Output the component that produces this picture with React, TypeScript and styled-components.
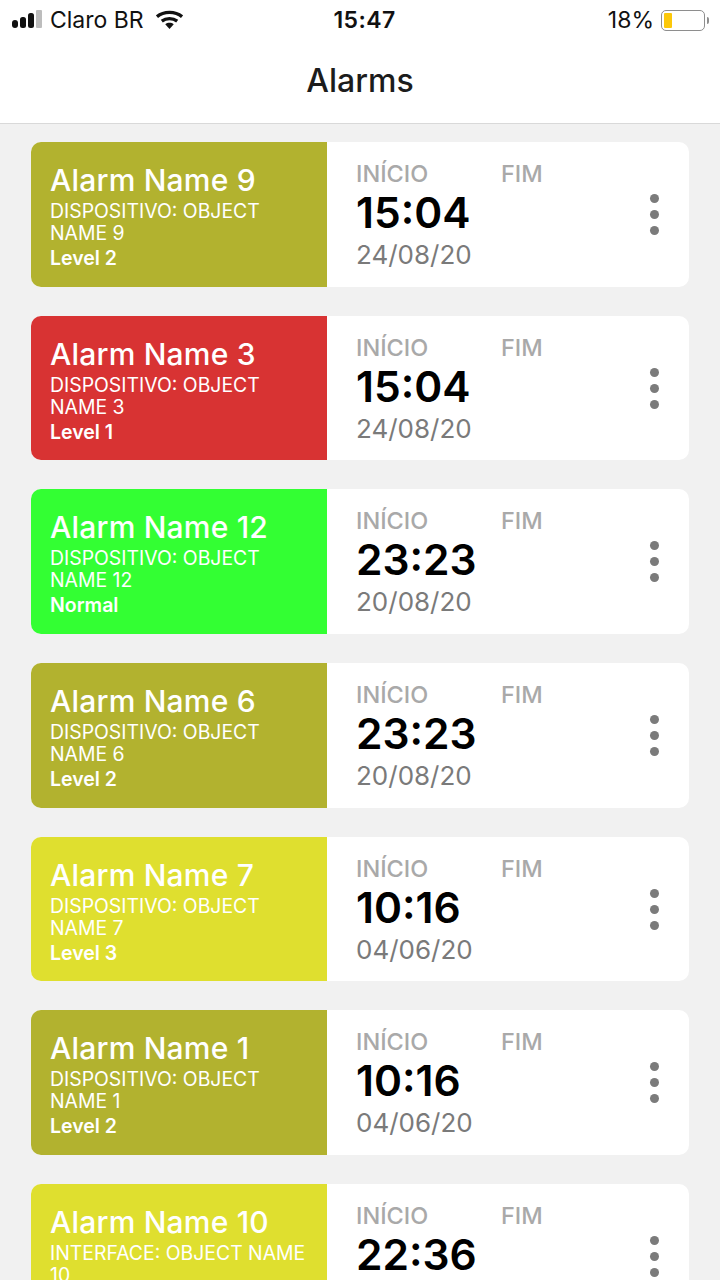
import styled, { createGlobalStyle } from 'styled-components';

const GlobalStyle = createGlobalStyle`
  html, body {
    margin: 0;
    padding: 0;
    height: 1280px;
    overflow: hidden;
    background: #f1f1f1;
    font-family: Inter, "Liberation Sans", sans-serif;
  }
`;

const Screen = styled.div`
  width: 720px;
  height: 1280px;
  overflow: hidden;
  display: flex;
  flex-direction: column;
`;

const Header = styled.header`
  flex: none;
  height: 123px;
  background: #fff;
  border-bottom: 1px solid #d9d9d9;
`;

const StatusBar = styled.div`
  height: 40px;
  display: grid;
  grid-template-columns: 1fr auto 1fr;
  align-items: center;
  padding: 0 11px 0 12px;
  font-size: 23px;
  color: #111;
`;

const StatusLeft = styled.div`
  display: flex;
  align-items: center;
`;

const Carrier = styled.span`
  margin-left: 6px;
  margin-right: 12px;
`;

const Clock = styled.div`
  margin-left: 8px;
  font-weight: 600;
  letter-spacing: 0.4px;
`;

const StatusRight = styled.div`
  display: flex;
  align-items: center;
  justify-content: flex-end;
`;

const Battery = styled.div`
  width: 44px;
  height: 21px;
  margin-left: 7px;
  box-sizing: border-box;
  border: 1.5px solid #8e8e8e;
  border-radius: 5px;
  padding: 2px;
  display: flex;
`;

const BatteryLevel = styled.div`
  width: 8px;
  background: #fcc80a;
  border-radius: 1px;
`;

const BatteryCap = styled.div`
  width: 2px;
  height: 7px;
  margin-left: 2px;
  background: #8e8e8e;
  border-radius: 0 2px 2px 0;
`;

const Title = styled.h1`
  margin: 0;
  height: 83px;
  padding-bottom: 3px;
  box-sizing: border-box;
  display: flex;
  align-items: center;
  justify-content: center;
  font-size: 32px;
  font-weight: 500;
  color: #1c1c1c;
`;

const List = styled.main`
  flex: none;
  display: flex;
  flex-direction: column;
  gap: 29px;
  padding: 18px 31px 0;
`;

const Card = styled.article`
  flex: none;
  height: 144.67px;
  display: flex;
  border-radius: 10px;
  overflow: hidden;
  background: #fff;
`;

const Info = styled.div<{ $color: string }>`
  flex: none;
  width: 296px;
  box-sizing: border-box;
  padding: 20px 19px 0;
  background: ${(p) => p.$color};
  color: #fff;
`;

const Name = styled.div`
  font-size: 30px;
  line-height: 36px;
  font-weight: 500;
  letter-spacing: 0.2px;
`;

const Device = styled.div`
  margin-top: 2px;
  font-size: 19.4px;
  line-height: 22px;
`;

const Level = styled.div`
  margin-top: 3px;
  font-size: 19.5px;
  line-height: 22px;
  font-weight: 600;
`;

const Times = styled.div`
  flex: 1;
  padding: 19px 0 0 29px;
  position: relative;
`;

const Labels = styled.div`
  display: flex;
  font-size: 23.5px;
  line-height: 26px;
  font-weight: 500;
  color: #a9a9a9;
`;

const Label = styled.span`
  width: 145px;
`;

const Time = styled.div`
  margin-top: 1px;
  font-size: 42.5px;
  line-height: 50px;
  font-weight: 600;
  color: #000;
`;

const DateText = styled.div`
  margin-top: 1px;
  font-size: 26px;
  line-height: 32px;
  color: #7a7a7a;
`;

const Menu = styled.div`
  position: absolute;
  top: 52px;
  right: 30px;
  display: flex;
  flex-direction: column;
  gap: 7px;
`;

const Dot = styled.span`
  width: 9px;
  height: 9px;
  border-radius: 50%;
  background: #7b7b7b;
`;

const OLIVE = '#b2b22f';
const RED = '#d83333';
const GREEN = '#33ff33';
const YELLOW = '#dfdf2f';

const alarms = [
  { name: 'Alarm Name 9', device: 'DISPOSITIVO: OBJECT NAME 9', level: 'Level 2', color: OLIVE, time: '15:04', date: '24/08/20' },
  { name: 'Alarm Name 3', device: 'DISPOSITIVO: OBJECT NAME 3', level: 'Level 1', color: RED, time: '15:04', date: '24/08/20' },
  { name: 'Alarm Name 12', device: 'DISPOSITIVO: OBJECT NAME 12', level: 'Normal', color: GREEN, time: '23:23', date: '20/08/20' },
  { name: 'Alarm Name 6', device: 'DISPOSITIVO: OBJECT NAME 6', level: 'Level 2', color: OLIVE, time: '23:23', date: '20/08/20' },
  { name: 'Alarm Name 7', device: 'DISPOSITIVO: OBJECT NAME 7', level: 'Level 3', color: YELLOW, time: '10:16', date: '04/06/20' },
  { name: 'Alarm Name 1', device: 'DISPOSITIVO: OBJECT NAME 1', level: 'Level 2', color: OLIVE, time: '10:16', date: '04/06/20' },
  { name: 'Alarm Name 10', device: 'INTERFACE: OBJECT NAME 10', level: 'Level 3', color: YELLOW, time: '22:36', date: '04/06/20' },
];

const Signal = () => (
  <svg width="32" height="20" viewBox="0 0 32 20">
    <rect x="0" y="10" width="6" height="8" rx="3" fill="#111" />
    <rect x="8" y="7" width="6" height="11" rx="2.5" fill="#111" />
    <rect x="16" y="3" width="6" height="15" rx="2.5" fill="#111" />
    <rect x="24" y="0" width="6" height="18" rx="1" fill="#bdbdbd" />
  </svg>
);

const Wifi = () => (
  <svg width="27" height="20" viewBox="0 0 28 20">
    <path d="M1 6.5C8 .6 20 .6 27 6.5" fill="none" stroke="#111" strokeWidth="3.4" />
    <path d="M6 11.2c4.6-3.6 11.4-3.6 16 0" fill="none" stroke="#111" strokeWidth="3.4" />
    <path d="M9.6 14.4c2.6-1.9 6.2-1.9 8.8 0L14 19.4z" fill="#111" />
  </svg>
);

export default function App() {
  return (
    <>
      <GlobalStyle />
      <Screen>
        <Header>
          <StatusBar>
            <StatusLeft>
              <Signal />
              <Carrier>Claro BR</Carrier>
              <Wifi />
            </StatusLeft>
            <Clock>15:47</Clock>
            <StatusRight>
              18%
              <Battery>
                <BatteryLevel />
              </Battery>
              <BatteryCap />
            </StatusRight>
          </StatusBar>
          <Title>Alarms</Title>
        </Header>
        <List>
          {alarms.map((a) => (
            <Card key={a.name}>
              <Info $color={a.color}>
                <Name>{a.name}</Name>
                <Device>{a.device}</Device>
                <Level>{a.level}</Level>
              </Info>
              <Times>
                <Labels>
                  <Label>INÍCIO</Label>
                  <Label>FIM</Label>
                </Labels>
                <Time>{a.time}</Time>
                <DateText>{a.date}</DateText>
                <Menu>
                  <Dot />
                  <Dot />
                  <Dot />
                </Menu>
              </Times>
            </Card>
          ))}
        </List>
      </Screen>
    </>
  );
}
